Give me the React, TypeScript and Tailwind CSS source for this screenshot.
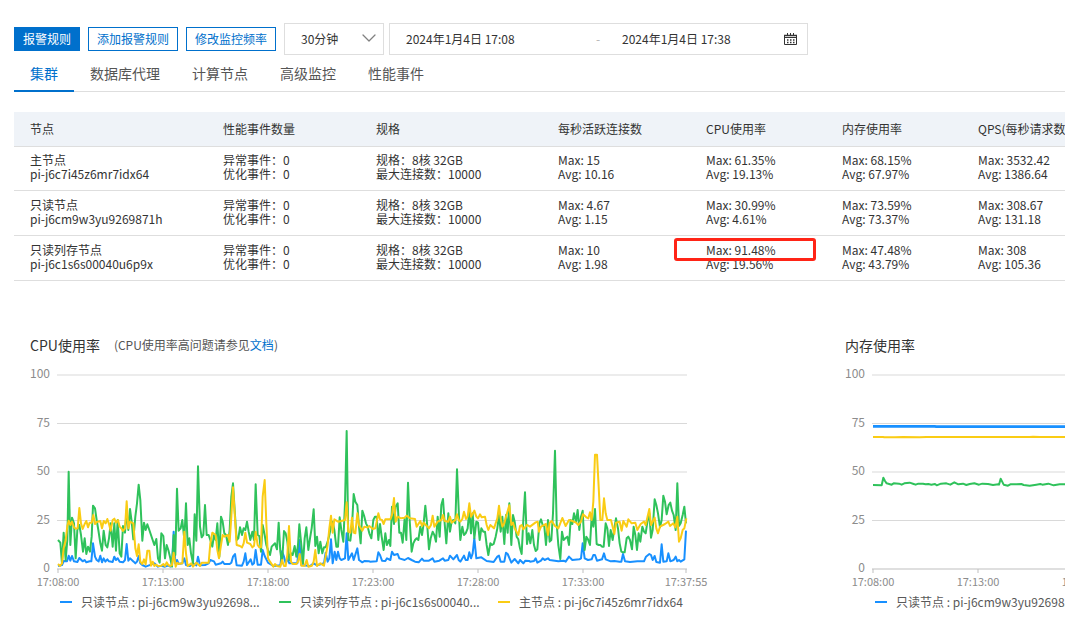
import { ChevronDown } from "lucide-react";

type Chunk = { offset: number; points: string };

type Series = { color: string; width: number; chunks: Chunk[] };

const tabs = ["集群", "数据库代理", "计算节点", "高级监控", "性能事件"];

const nodes = [
  {
    name: "主节点",
    id: "pi-j6c7i45z6mr7idx64",
    connections: ["15", "10.16"],
    cpu: ["61.35%", "19.13%"],
    memory: ["68.15%", "67.97%"],
    qps: ["3532.42", "1386.64"],
  },
  {
    name: "只读节点",
    id: "pi-j6cm9w3yu9269871h",
    connections: ["4.67", "1.15"],
    cpu: ["30.99%", "4.61%"],
    memory: ["73.59%", "73.37%"],
    qps: ["308.67", "131.18"],
  },
  {
    name: "只读列存节点",
    id: "pi-j6c1s6s00040u6p9x",
    connections: ["10", "1.98"],
    cpu: ["91.48%", "19.56%"],
    memory: ["47.48%", "43.79%"],
    qps: ["308", "105.36"],
    highlightCpu: true,
  },
];

const legend = [
  { color: "bg-[#1890ff]", label: "只读节点 : pi-j6cm9w3yu92698..." },
  { color: "bg-[#2fc25b]", label: "只读列存节点 : pi-j6c1s6s00040..." },
  { color: "bg-[#facc14]", label: "主节点 : pi-j6c7i45z6mr7idx64" },
];

// Points are in thirds of a chart pixel, y grows downwards and 447 is zero.
const cpuSeries: Series[] = [
  {
    color: "#1890ff",
    width: 6,
    chunks: [
      {
        offset: -24,
        points:
          "24,438 36,435 41,423 51,424 56,407 61,422 66,408 72,424 82,426 88,414 98,424 104,420 109,427 119,424 124,424 129,370 135,410 140,420 146,424 151,407 156,427 161,415 166,425 172,418 177,424 188,426 193,410 198,420 203,415 209,425 219,427 225,420 230,372 235,422 240,415 251,425 256,430 261,425 266,408 271,430 277,435 287,440 313,430 324,440 334,437 345,440 355,437 361,440 366,435 371,335 376,430 381,420 386,432 397,430 403,415 408,435 420,438 430,430 439,436 444,410 450,436 465,435 476,430",
      },
      {
        offset: 456,
        points:
          "1,420 12,424 17,434 33,430 38,425 43,432 59,432 64,428 69,410 75,402 80,436 96,437 101,425 106,400 111,435 122,418 127,434 132,430 137,390 143,434 153,434 158,390 164,408 174,428 180,432 190,438 211,436 216,394 222,410 227,430 232,415 238,430 262,430 268,360 274,435 300,438 311,430 321,436 342,430 347,398 353,425 358,415 363,358 368,430 374,395 379,420 384,395 389,415 394,420 405,415 410,340 415,420 426,400 431,420 442,385 447,420 457,427 463,423 478,424",
      },
      {
        offset: 936,
        points:
          "0,425 20,424 25,397 30,405 36,422 46,423 51,415 61,420 66,395 72,405 83,402 88,415 104,420 114,414 125,420 135,425 146,427 156,416 161,422 177,422 188,415 193,425 208,422 219,415 224,422 235,420 240,407 250,418 261,405 266,420 271,425 282,407 287,420 293,420 298,397 303,415 308,400 313,355 319,415 334,412 350,423 371,426 382,410 387,407 392,425 403,425 408,398 413,402 424,428 434,417 445,430 450,420 460,430 466,422 478,423",
      },
      {
        offset: 1416,
        points:
          "0,425 12,423 17,415 22,428 33,422 38,415 44,420 54,415 59,420 85,424 101,422 107,425 117,410 127,420 148,418 153,415 158,370 164,415 174,420 185,418 190,405 195,405 201,422 216,418 222,400 227,418 242,424 253,423 269,425 274,425 279,402 285,424 300,426 322,424 342,424 348,410 358,402 363,405 368,420 374,408 379,426 390,428 395,373 400,425 410,424 415,400 421,424 431,420 437,410 442,424 447,420 452,425 463,418 468,332",
      },
    ],
  },
  {
    color: "#2fc25b",
    width: 6,
    chunks: [
      {
        offset: -24,
        points:
          "24,360 31,368 36,430 41,338 47,420 52,360 56,155 61,375 66,293 72,310 77,415 82,330 88,315 93,345 99,395 104,355 109,402 114,380 120,395 125,350 129,257 135,265 140,300 145,330 151,370 156,392 161,332 167,375 172,382 177,355 182,310 188,380 193,310 198,392 203,300 209,400 214,410 219,318 225,338 230,270 235,330 240,267 245,305 250,358 256,290 261,250 266,194 271,240 277,362 282,308 287,330 292,313 298,330 303,345 308,360 313,375 319,357 324,415 329,428 334,340 340,348 345,415 350,375 355,390 361,415 366,440 371,345 376,405 381,206 386,332 392,325 397,300 403,360 408,250 413,375 418,355 423,400 429,430 434,283 439,362 444,139 450,320 455,352 460,345 465,255 470,345 476,345",
      },
      {
        offset: 456,
        points:
          "1,360 7,380 12,345 17,360 22,310 28,410 33,290 38,305 43,340 48,345 54,375 59,330 64,230 69,190 74,270 80,360 85,355 90,322 96,345 101,325 106,330 111,305 116,335 121,360 127,335 132,360 137,193 143,345 148,348 153,395 158,315 164,345 169,375 174,390 180,405 185,380 195,370 201,388 206,308 211,395 216,430 222,333 227,340 232,365 238,420 243,400 248,405 254,378 259,410 264,375 268,313 274,375 279,430 284,355 289,322 295,390 300,355 305,325 311,268 316,378 321,350 326,400 331,365 337,400 342,382 347,382 353,365 358,345 363,320 368,305 373,330 379,380 384,380 389,292 394,330 400,365 405,250 410,33 415,360 421,362 426,320 431,222 436,245 442,255 447,320 452,370 457,272 463,290 468,310 473,320 478,340",
      },
      {
        offset: 936,
        points:
          "4,355 10,300 15,290 20,290 25,360 30,312 35,350 41,390 46,340 51,375 57,360 61,378 66,260 72,312 77,260 83,250 88,338 93,338 98,368 104,295 109,360 114,188 119,300 125,395 130,370 135,360 140,355 145,360 151,320 156,345 161,310 166,257 172,320 177,388 182,355 188,335 193,345 198,365 203,290 209,350 214,255 219,237 224,310 229,370 235,280 240,335 245,305 250,300 256,310 261,148 267,290 271,360 277,320 282,345 287,340 293,325 298,270 303,340 308,280 313,355 319,305 324,308 329,360 334,325 340,335 345,335 350,375 355,405 361,370 366,375 371,372 377,350 382,325 387,285 392,335 397,290 403,372 408,285 413,338 418,250 424,375 429,285 434,305 440,350 445,358 450,385 455,402 460,300 465,217 471,372 476,340",
      },
      {
        offset: 1416,
        points:
          "1,370 7,330 12,375 17,393 22,388 28,310 33,298 38,315 43,320 48,375 54,300 59,365 64,360 69,280 75,92 80,310 85,375 91,417 96,335 101,360 106,355 112,350 117,375 122,300 127,312 132,280 138,305 143,270 148,330 153,290 158,272 164,390 169,350 174,358 180,375 185,290 190,320 195,267 200,372 206,375 211,375 216,380 221,380 227,310 232,325 237,378 242,330 248,360 253,325 258,295 264,325 269,370 274,395 279,397 284,397 290,355 295,350 300,360 306,388 311,320 316,345 321,390 326,340 331,365 337,320 342,335 347,340 353,300 358,280 363,353 368,330 374,238 379,255 384,280 390,322 395,300 400,227 405,245 410,283 416,255 421,248 426,272 431,285 437,330 442,190 447,318 452,310 458,285 463,260 468,310",
      },
    ],
  },
  {
    color: "#facc14",
    width: 6,
    chunks: [
      {
        offset: -24,
        points:
          "24,432 30,438 36,430 41,385 47,360 52,318 56,302 61,315 66,305 72,322 77,326 83,325 88,264 93,310 98,327 104,312 109,303 114,322 119,308 125,308 130,285 135,312 140,306 151,303 156,325 161,303 167,310 172,297 177,312 182,332 188,300 193,296 198,308 204,300 209,320 214,325 219,333 225,325 230,244 235,325 240,305 250,310 256,385 261,408 266,373 271,425 277,432 282,418 287,433 292,392 298,392 303,437 308,425 313,438 319,434 324,438 334,437 340,432 345,438 350,427 355,435 361,438 366,435 371,398 377,440 382,428 387,432 397,430 403,335 408,400 413,438 424,430 429,440 439,428 450,438 455,428 476,428",
      },
      {
        offset: 456,
        points:
          "1,370 7,338 17,345 22,390 27,415 33,375 38,345 43,350 54,345 59,365 64,290 69,202 74,280 80,375 90,378 96,382 101,370 106,338 111,368 121,372 127,382 132,378 137,335 143,375 148,382 153,382 158,230 164,180 169,310 174,415 180,425 190,440 195,432 201,438 211,440 216,420 222,438 227,438 232,405 237,318 243,425 248,432 259,432 264,425 269,402 274,437 284,437 290,420 295,440 306,437 311,425 316,390 321,438 331,430 342,437 347,410 353,375 358,325 363,287 368,338 373,298 384,305 394,303 405,300 410,247 415,335 421,338 426,293 431,338 436,340 442,280 447,315 457,332 463,320 473,323 478,318",
      },
      {
        offset: 936,
        points:
          "9,327 16,325 25,280 30,298 36,300 41,312 46,298 61,298 66,285 72,234 77,305 83,290 93,295 104,293 110,287 120,295 135,297 140,320 151,303 156,318 161,308 167,315 177,325 183,315 188,287 193,320 203,305 214,300 219,285 224,303 235,305 240,290 245,308 256,300 261,283 266,300 271,305 277,297 282,275 288,297 293,290 298,250 303,290 313,272 319,290 324,295 330,283 335,292 345,290 350,315 355,330 361,315 372,325 382,295 387,257 392,295 397,320 403,310 408,290 418,256 424,315 429,308 434,325 445,345 450,318 455,315 460,328 471,315",
      },
      {
        offset: 1416,
        points:
          "0,320 17,307 23,305 27,335 33,320 48,312 54,345 59,308 65,303 75,318 85,325 97,294 107,318 117,300 127,303 138,308 145,315 153,305 159,283 169,292 175,295 180,277 185,300 190,245 195,104 201,104 206,200 211,300 217,300 222,235 227,280 232,300 243,300 248,320 253,342 258,308 269,305 275,332 280,303 290,320 295,298 305,310 316,308 322,330 332,312 342,305 347,315 358,267 363,315 374,293 379,325 384,340 390,320 405,312 415,305 420,318 430,310 436,322 442,290 447,365 452,355 458,330 463,325 469,295",
      },
    ],
  },
];

const memorySeries: Series[] = [
  {
    color: "#1890ff",
    width: 8,
    chunks: [{ offset: 0, points: "0,19 185,19 190,20 1884,20" }],
  },
  {
    color: "#2fc25b",
    width: 6,
    chunks: [
      {
        offset: 0,
        points:
          "0,195 26,196 31,173 36,183 41,190 56,194 62,190 78,191 86,194 94,190 110,188 122,192 128,194 136,191 150,191 158,193 166,192 175,194 186,192 191,196 204,191 220,190 232,194 244,187 256,193 270,191 280,195 290,192 304,190 318,194 328,191 345,192 360,195 376,193 378,194 383,176 392,194 405,197 412,193 430,193 445,192 452,195 470,197 490,194 502,192 508,194 526,191 542,196 560,193 580,193 620,192",
      },
    ].map((c) => ({ ...c, offset: 0 })),
  },
  {
    color: "#facc14",
    width: 6,
    chunks: [{ offset: 0, points: "0,51 30,51 34,52 66,52 90,51 140,52 160,51 470,51 480,50 500,51 1884,51" }],
  },
];

const yTicks = [100, 75, 50, 25, 0];

const xTicks = [
  { x: 28, label: "17:08:00" },
  { x: 133, label: "17:13:00" },
  { x: 238, label: "17:18:00" },
  { x: 343, label: "17:23:00" },
  { x: 448, label: "17:28:00" },
  { x: 553, label: "17:33:00" },
  { x: 656, label: "17:37:55" },
];

function toPath(chunks: Chunk[]) {
  return chunks
    .flatMap(({ offset, points }) =>
      points.split(" ").map((p) => {
        const [x, y] = p.split(",").map(Number);
        return `${x + offset},${y + 135}`;
      })
    )
    .join(" ");
}

function LineChart({ series, name }: { series: Series[]; name: string }) {
  return (
    <svg width="680" height="226" viewBox="0 0 680 226" role="img" aria-label={name}>
      {yTicks.map((tick, i) => {
        const y = 11 + i * 48.5;
        return (
          <g key={tick}>
            <line x1="27" x2="657" y1={y} y2={y} stroke={tick ? "#d9d9d9" : "#bfbfbf"} />
            <text x="20" y={y + 3} textAnchor="end" fontSize="12" fill="#8c8c8c">
              {tick}
            </text>
          </g>
        );
      })}
      {xTicks.map(({ x, label }) => (
        <g key={label}>
          <line x1={x} x2={x} y1="205" y2="209" stroke="#bfbfbf" />
          <text x={x} y="222" textAnchor="middle" fontSize="11" fill="#8c8c8c">
            {label}
          </text>
        </g>
      ))}
      <g transform="translate(28 11) scale(0.33333)" fill="none" strokeLinejoin="round">
        {series.map(({ color, width, chunks }) => (
          <polyline key={color} points={toPath(chunks)} stroke={color} strokeWidth={width} />
        ))}
      </g>
    </svg>
  );
}

function Legend() {
  return (
    <ul className="flex pl-[30px] text-xs leading-6 text-[#595959]">
      {legend.map((item) => (
        <li key={item.label} className="flex w-[219px] shrink-0 items-center gap-[9px] whitespace-nowrap">
          <span className={`h-0.5 w-3 shrink-0 ${item.color}`} />
          {item.label}
        </li>
      ))}
    </ul>
  );
}

function CalendarIcon() {
  return (
    <svg width="13" height="13" viewBox="0 0 13 13" fill="none" stroke="#333" className="shrink-0">
      <path d="M0.5 2.5h12v9h-12zM0.5 4.5h12M3.5 0v3M6.5 0v3M9.5 0v3" />
      <path d="M0 2.5h13" strokeWidth="1.5" />
      <path d="M3 7h1.5M6 7h1.5M9 7h1.5M3 9.5h1.5M6 9.5h1.5M9 9.5h1.5" strokeWidth="1.5" />
    </svg>
  );
}

function Stat({ values, highlight }: { values: string[]; highlight?: boolean }) {
  return (
    <td className="pb-0.5 pl-4">
      <div className="relative">
        Max: {values[0]}
        {highlight && (
          <span className="pointer-events-none absolute -top-[5px] -left-8 h-[23px] w-[142px] rounded-[3px] border-3 border-[#ff2416]" />
        )}
      </div>
      <div>Avg: {values[1]}</div>
    </td>
  );
}

export default function App() {
  return (
    <main className="min-h-screen overflow-hidden bg-white pt-[23px] pl-3.5 font-['Noto_Sans_CJK_SC',sans-serif] text-xs text-[#333]">
      {/* Toolbar */}
      <div className="flex items-center gap-2">
        <button className="h-6 border border-[#0070cc] bg-[#0070cc] px-2 leading-5 text-white">报警规则</button>
        <button className="h-6 border border-[#0070cc] px-2 leading-5 text-[#0070cc]">添加报警规则</button>
        <button className="h-6 border border-[#0070cc] px-2 leading-5 text-[#0070cc]">修改监控频率</button>
        <div className="flex gap-[5px]">
          <div className="relative">
            <select
              aria-label="时间范围"
              className="h-8 w-[100px] appearance-none border border-[#dedede] bg-white pl-4"
            >
              <option>30分钟</option>
            </select>
            <ChevronDown
              size={24}
              strokeWidth={1.25}
              className="pointer-events-none absolute top-[3px] right-[3px] text-[#808080]"
            />
          </div>
          <div className="flex h-8 w-[419px] items-center border border-[#dedede]">
            <input aria-label="开始时间" className="w-[200px] pl-4" defaultValue="2024年1月4日 17:08" />
            <span className="w-4 text-center text-[#b3b3b3]">-</span>
            <input aria-label="结束时间" className="w-[178px] pl-4" defaultValue="2024年1月4日 17:38" />
            <button aria-label="选择日期">
              <CalendarIcon />
            </button>
          </div>
        </div>
      </div>

      {/* Tabs */}
      <nav className="flex h-[37px] border-b border-[#dedede] text-sm text-[#555]">
        {tabs.map((tab, i) => (
          <button
            key={tab}
            className={`h-[37px] border-b-2 px-4 leading-9 ${
              i === 0 ? "border-[#0070cc] text-[#0070cc]" : "border-transparent"
            }`}
          >
            {tab}
          </button>
        ))}
      </nav>

      {/* Node table */}
      <div className="mt-5 overflow-hidden">
        <table className="w-[1200px] table-fixed text-left leading-[14px] whitespace-nowrap">
          <thead>
            <tr className="h-[34px] border-b border-[#dedede] bg-[#eff3f8]">
              <th className="w-[193px] pl-4 font-normal">节点</th>
              <th className="w-[153px] pl-4 font-normal">性能事件数量</th>
              <th className="w-[182px] pl-4 font-normal">规格</th>
              <th className="w-[148px] pl-4 font-normal">每秒活跃连接数</th>
              <th className="w-[136px] pl-4 font-normal">CPU使用率</th>
              <th className="w-[136px] pl-4 font-normal">内存使用率</th>
              <th className="pl-4 font-normal">QPS(每秒请求数)</th>
            </tr>
          </thead>
          <tbody>
            {nodes.map((node) => (
              <tr key={node.id} className="h-[45px] border-b border-[#dedede] first:h-11">
                <td className="pb-0.5 pl-4">
                  <div>{node.name}</div>
                  <div>{node.id}</div>
                </td>
                <td className="pb-0.5 pl-4">
                  <div>异常事件：0</div>
                  <div>优化事件：0</div>
                </td>
                <td className="pb-0.5 pl-4">
                  <div>规格：8核 32GB</div>
                  <div>最大连接数：10000</div>
                </td>
                <Stat values={node.connections} />
                <Stat values={node.cpu} highlight={node.highlightCpu} />
                <Stat values={node.memory} />
                <Stat values={node.qps} />
              </tr>
            ))}
          </tbody>
        </table>
      </div>

      {/* Charts */}
      <div className="mt-[54px] flex overflow-hidden pl-4">
        <section className="w-[815px] shrink-0">
          <div className="flex h-[29px] items-start gap-3.5 leading-5">
            <h2 className="text-sm leading-5">CPU使用率</h2>
            <p className="text-[#555]">
              (CPU使用率高问题请参见
              <a href="#doc" className="text-[#0070cc]">
                文档
              </a>
              )
            </p>
          </div>
          <LineChart series={cpuSeries} name="CPU使用率" />
          <Legend />
        </section>
        <section className="w-[815px] shrink-0">
          <div className="flex h-[29px] items-start leading-5">
            <h2 className="text-sm leading-5">内存使用率</h2>
          </div>
          <LineChart series={memorySeries} name="内存使用率" />
          <Legend />
        </section>
      </div>
    </main>
  );
}
